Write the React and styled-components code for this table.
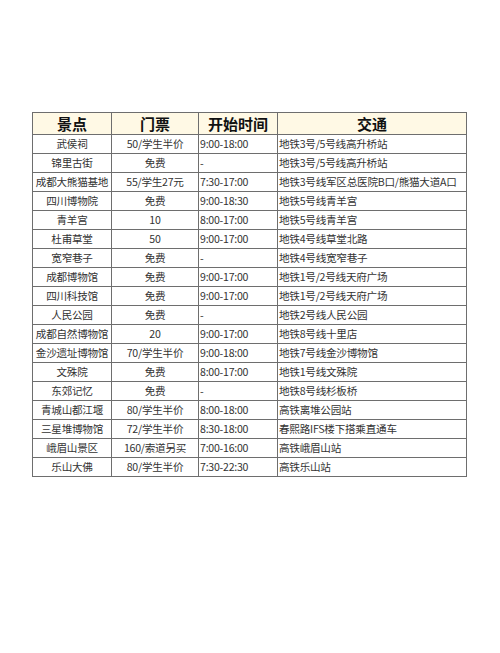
import React from "react"
import styled, { createGlobalStyle } from "styled-components"

const rows = [
  ["武侯祠", "50/学生半价", "9:00-18:00", "地铁3号/5号线高升桥站"],
  ["锦里古街", "免费", "-", "地铁3号/5号线高升桥站"],
  ["成都大熊猫基地", "55/学生27元", "7:30-17:00", "地铁3号线军区总医院B口/熊猫大道A口"],
  ["四川博物院", "免费", "9:00-18:30", "地铁5号线青羊宫"],
  ["青羊宫", "10", "8:00-17:00", "地铁5号线青羊宫"],
  ["杜甫草堂", "50", "9:00-17:00", "地铁4号线草堂北路"],
  ["宽窄巷子", "免费", "-", "地铁4号线宽窄巷子"],
  ["成都博物馆", "免费", "9:00-17:00", "地铁1号/2号线天府广场"],
  ["四川科技馆", "免费", "9:00-17:00", "地铁1号/2号线天府广场"],
  ["人民公园", "免费", "-", "地铁2号线人民公园"],
  ["成都自然博物馆", "20", "9:00-17:00", "地铁8号线十里店"],
  ["金沙遗址博物馆", "70/学生半价", "9:00-18:00", "地铁7号线金沙博物馆"],
  ["文殊院", "免费", "8:00-17:00", "地铁1号线文殊院"],
  ["东郊记忆", "免费", "-", "地铁8号线杉板桥"],
  ["青城山都江堰", "80/学生半价", "8:00-18:00", "高铁离堆公园站"],
  ["三星堆博物馆", "72/学生半价", "8:30-18:00", "春熙路IFS楼下搭乘直通车"],
  ["峨眉山景区", "160/索道另买", "7:00-16:00", "高铁峨眉山站"],
  ["乐山大佛", "80/学生半价", "7:30-22:30", "高铁乐山站"],
]

const widths = [79, 87, 79, 189]
const aligns = ["center", "center", "left", "left"]

const App = () => (
  <Page>
    <GlobalStyle />
    <Table>
      <colgroup>
        {widths.map((w, i) => (
          <col key={i} style={{ width: w }} />
        ))}
      </colgroup>
      <thead>
        <tr>
          <Head>景点</Head>
          <Head>门票</Head>
          <Head>开始时间</Head>
          <Head>交通</Head>
        </tr>
      </thead>
      <tbody>
        {rows.map((r) => (
          <Row key={r[0]}>
            {r.map((c, i) => (
              <Cell key={i} $align={aligns[i]}>
                {c}
              </Cell>
            ))}
          </Row>
        ))}
      </tbody>
    </Table>
  </Page>
)

const GlobalStyle = createGlobalStyle`
  body {
    margin: 0;
    background: #ffffff;
    font-family: "Noto Sans CJK SC", "Noto Sans", sans-serif;
  }
`

const Page = styled.div`
  width: 500px;
  height: 653px;
  padding: 112px 0 0 32px;
  box-sizing: border-box;
`

const Table = styled.table`
  border-collapse: collapse;
  table-layout: fixed;
  width: 434px;
`

const Head = styled.th`
  height: 21px;
  padding: 0;
  background: #fff9e5;
  border: 1px solid #6e6e6e;
  font-size: 15px;
  font-weight: 700;
  color: #111;
  text-align: center;
  line-height: 20px;
`

const Row = styled.tr`
  height: 19px;
`

const Cell = styled.td`
  padding: 0 1px;
  border: 1px solid #6e6e6e;
  font-size: 10.6px;
  letter-spacing: -0.25px;
  line-height: 18px;
  color: #333;
  text-align: ${(p) => p.$align};
  white-space: nowrap;
`

export default App
